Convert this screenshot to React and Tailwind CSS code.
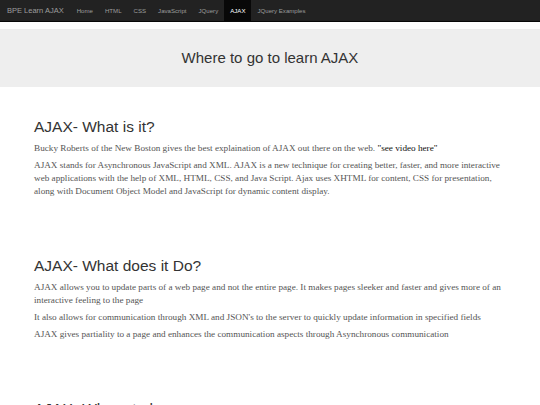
import React from 'react';

const links = ['Home', 'HTML', 'CSS', 'JavaScript', 'JQuery', 'AJAX', 'JQuery Examples'];

function Section({ title, children }) {
  return (
    <section className="mb-[59px]">
      <h2 className="font-['Liberation_Sans',Arial,sans-serif] text-[15.5px] leading-[1.1] text-[#333] mb-[7px]">
        {title}
      </h2>
      <div className="font-['Liberation_Serif','Times_New_Roman',serif] text-[9.2px] leading-[13px] text-[#555]">
        {children}
      </div>
    </section>
  );
}

export default function App() {
  return (
    <div className="min-h-screen bg-white">
      <nav className="h-[22px] bg-[#222] border-b border-[#080808] flex items-stretch font-['Liberation_Sans',Arial,sans-serif]">
        <a className="flex items-center px-[7px] text-[7.5px] text-[#9d9d9d]">BPE Learn AJAX</a>
        <ul className="flex items-stretch">
          {links.map((l) => (
            <li
              key={l}
              className={
                l === 'AJAX'
                  ? 'flex items-center px-[6px] text-[6.1px] bg-[#080808] text-white'
                  : 'flex items-center px-[6px] text-[6.1px] text-[#9d9d9d]'
              }
            >
              {l}
            </li>
          ))}
        </ul>
      </nav>

      <div className="mt-[7px] h-[58px] bg-[#eee] flex items-center justify-center">
        <h1 className="font-['Liberation_Sans',Arial,sans-serif] text-[15px] text-[#333]">
          Where to go to learn AJAX
        </h1>
      </div>

      <main className="px-[34px] pt-[31px]">
        <Section title="AJAX- What is it?">
          <p className="mb-[4px]">
            Bucky Roberts of the New Boston gives the best explaination of AJAX out there on the web.{' '}
            <a className="text-[#111]">"see video here"</a>
          </p>
          <p className="mb-[4px]">
            AJAX stands for Asynchronous JavaScript and XML. AJAX is a new technique for creating better, faster, and more interactive web applications with the help of XML, HTML, CSS, and Java Script. Ajax uses XHTML for content, CSS for presentation, along with Document Object Model and JavaScript for dynamic content display.
          </p>
        </Section>

        <Section title="AJAX- What does it Do?">
          <p className="mb-[4px]">
            AJAX allows you to update parts of a web page and not the entire page. It makes pages sleeker and faster and gives more of an interactive feeling to the page
          </p>
          <p className="mb-[4px]">
            It also allows for communication through XML and JSON's to the server to quickly update information in specified fields
          </p>
          <p className="mb-[4px]">
            AJAX gives partiality to a page and enhances the communication aspects through Asynchronous communication
          </p>
        </Section>

        <Section title="AJAX- Where to learn">
          <p className="mb-[4px]">
            There are many places on the web to learn AJAX.
          </p>
        </Section>
      </main>
    </div>
  );
}
